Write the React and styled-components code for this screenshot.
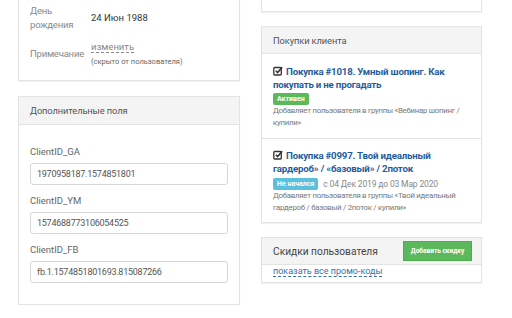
import React from "react";
import styled, { createGlobalStyle } from "styled-components";

const Global = createGlobalStyle`
  html, body { margin: 0; padding: 0; background: #fff; }
  body { font-family: Roboto, "Liberation Sans", sans-serif; color: #333; overflow: hidden; }
`;

const Page = styled.div`
  display: grid;
  grid-template-columns: 222px 221px;
  column-gap: 21px;
  padding-left: 18px;
  margin-top: -40px;
  align-items: start;
`;

const Column = styled.div`
  display: flex;
  flex-direction: column;
  gap: ${(p) => p.$gap}px;
`;

const Panel = styled.div`
  border: 1px solid #e3e3e3;
  box-shadow: 0 1px 1px rgba(0, 0, 0, 0.05);
  background: #fff;
  height: ${(p) => (p.$h ? p.$h + "px" : "auto")};
  box-sizing: border-box;
`;

const Head = styled.div`
  background: #f4f4f4;
  border-bottom: 1px solid #e3e3e3;
  height: ${(p) => p.$h || 28}px;
  box-sizing: border-box;
  padding: 0 ${(p) => p.$pr || 11}px 0 11px;
  display: flex;
  align-items: center;
  justify-content: space-between;
  font-size: ${(p) => p.$fs || 9.3}px;
  letter-spacing: ${(p) => (p.$fs ? 0 : -0.1)}px;
  color: ${(p) => p.$color || "#555"};
`;

const InfoBody = styled.div`
  padding: 43px 11px 13px;
  display: flex;
  flex-direction: column;
  gap: 8px;
  font-size: 10px;
`;

const Row = styled.div`
  display: flex;
  align-items: center;
`;

const Label = styled.div`
  width: 61px;
  flex-shrink: 0;
  font-size: 9.5px;
  letter-spacing: -0.2px;
  line-height: 14px;
  color: #8a8a8a;
`;

const Value = styled.div`
  font-size: 9.5px;
  color: #333;
  line-height: 14px;
`;

const EditLink = styled.span`
  font-size: 9.5px;
  color: #888;
  border-bottom: 1px dashed #888;
  line-height: 13px;
`;

const Hint = styled.div`
  font-size: 7.5px;
  line-height: 10px;
  color: #666;
  margin-top: 4px;
`;

const FieldsBody = styled.div`
  padding: 21px 11px 21px;
  display: flex;
  flex-direction: column;
`;

const FieldLabel = styled.div`
  font-size: 9.5px;
  color: #666;
  line-height: 12px;
  margin-bottom: 5px;
`;

const Input = styled.div`
  height: 22px;
  box-sizing: border-box;
  border: 1px solid #d6d6d6;
  border-radius: 3px;
  padding: 0 6px;
  display: flex;
  align-items: center;
  font-size: 9px;
  letter-spacing: -0.25px;
  color: #555;
  margin-bottom: 10px;
  &:last-child { margin-bottom: 0; }
`;

const Purchase = styled.div`
  padding: ${(p) => (p.$first ? "10.5px 11px 9px" : "9.5px 11px 8.5px")};
  border-top: ${(p) => (p.$first ? "none" : "1px solid #e3e3e3")};
`;

const Title = styled.div`
  font-size: 9.7px;
  font-weight: 700;
  letter-spacing: -0.2px;
  color: #1f5c9c;
  line-height: 13px;
  svg { vertical-align: -1px; margin-right: 3px; }
`;

const Meta = styled.div`
  display: flex;
  align-items: center;
  gap: 5px;
  margin-top: ${(p) => p.$mt}px;
  font-size: 8.5px;
  letter-spacing: -0.15px;
  color: #888;
`;

const Badge = styled.span`
  background: ${(p) => p.$bg};
  color: #fff;
  font-size: 7px;
  font-weight: 700;
  letter-spacing: 0;
  padding: 0 4px;
  height: 12px;
  line-height: 12px;
  border-radius: 2px;
`;

const Desc = styled.div`
  font-size: 7.8px;
  letter-spacing: -0.25px;
  color: #777;
  line-height: ${(p) => p.$lh}px;
`;

const AddButton = styled.div`
  background: #5cb85c;
  border: 1px solid #4cae4c;
  color: #fff;
  font-size: 6.5px;
  font-weight: 700;
  letter-spacing: 0;
  width: 69px;
  height: 20px;
  box-sizing: border-box;
  display: flex;
  align-items: center;
  justify-content: center;
`;

const PromoLink = styled.div`
  padding: 0 11px;
  height: 17px;
  font-size: 9px;
  color: #3e6fa6;
  line-height: 13px;
  span { border-bottom: 1px dashed #3e6fa6; }
`;

const CheckIcon = () => (
  <svg width="10" height="10" viewBox="0 0 10 10">
    <rect x="0.8" y="1.5" width="7.5" height="7.5" rx="1" fill="none" stroke="#333" strokeWidth="1.3" />
    <path d="M2.8 4.8 L4.6 6.6 L9.2 1.2" fill="none" stroke="#333" strokeWidth="1.6" />
  </svg>
);

export default function App() {
  return (
    <>
      <Global />
      <Page>
        <Column $gap={15}>
          <Panel>
            <InfoBody>
              <Row>
                <Label>День<br />рождения</Label>
                <Value>24 Июн 1988</Value>
              </Row>
              <Row>
                <Label>Примечание</Label>
                <div>
                  <EditLink>изменить</EditLink>
                  <Hint>(скрыто от пользователя)</Hint>
                </div>
              </Row>
            </InfoBody>
          </Panel>
          <Panel>
            <Head $h={28}>Дополнительные поля</Head>
            <FieldsBody>
              <FieldLabel>ClientID_GA</FieldLabel>
              <Input>1970958187.1574851801</Input>
              <FieldLabel>ClientID_YM</FieldLabel>
              <Input>1574688773106054525</Input>
              <FieldLabel>ClientID_FB</FieldLabel>
              <Input>fb.1.1574851801693.815087266</Input>
            </FieldsBody>
          </Panel>
        </Column>
        <Column $gap={14}>
          <Panel $h={52} />
          <Panel>
            <Head $h={27}>Покупки клиента</Head>
            <Purchase $first>
              <Title><CheckIcon />Покупка #1018. Умный шопинг. Как покупать и не прогадать</Title>
              <Meta $mt={2.5}><Badge $bg="#5cb85c">Активен</Badge></Meta>
              <Desc $lh={12}>Добавляет пользователя в группы «Вебинар шопинг / купили»</Desc>
            </Purchase>
            <Purchase>
              <Title><CheckIcon />Покупка #0997. Твой идеальный гардероб» / «базовый» / 2поток</Title>
              <Meta $mt={3}><Badge $bg="#5bc0de">Не начался</Badge>с 04 Дек 2019 до 03 Мар 2020</Meta>
              <Desc $lh={12}>Добавляет пользователя в группы «Твой идеальный гардероб / базовый / 2поток / купили»</Desc>
            </Purchase>
          </Panel>
          <Panel>
            <Head $h={27} $fs={10.2} $pr={9} $color="#444">
              Скидки пользователя
              <AddButton>Добавить скидку</AddButton>
            </Head>
            <PromoLink><span>показать все промо-коды</span></PromoLink>
          </Panel>
        </Column>
      </Page>
    </>
  );
}
